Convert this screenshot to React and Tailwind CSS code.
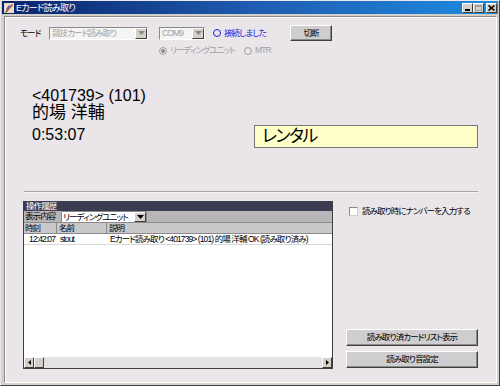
import React from "react";

const ui = "font-['Liberation_Sans','Noto_Sans_CJK_JP',sans-serif] [font-feature-settings:'palt']";
const small = "text-[8.5px] tracking-[-0.9px]";

const DropArrow = ({ disabled }) => (
    <div className="w-[12px] h-full shrink-0 bg-[#d4d0c8] border border-t-white border-l-white border-r-[#404040] border-b-[#404040] flex items-center justify-center">
        <svg width="7" height="4" viewBox="0 0 7 4">
            <path d="M0 0h7L3.5 4z" fill={disabled ? "#8a8a8a" : "#000"} />
        </svg>
    </div>
);

const Combo = ({ text, w }) => (
    <div className={`${w} h-[13px] flex bg-[#f6f5f6] border border-t-[#8a8a8a] border-l-[#8a8a8a] border-r-white border-b-white`}>
        <span className={`flex-1 ${small} leading-[11px] text-[#a09ea0] pl-[2px] whitespace-nowrap overflow-hidden`}>{text}</span>
        <DropArrow disabled />
    </div>
);

const Button = ({ children, className }) => (
    <div
        className={`${className} bg-[#cfcdcf] border border-t-white border-l-white border-r-[#404040] border-b-[#404040] shadow-[inset_-1px_-1px_0_#8a8a8a] flex items-center justify-center ${small} text-black whitespace-nowrap`}
    >
        {children}
    </div>
);

const Radio = ({ filled, color }) => (
    <span
        className={`inline-flex shrink-0 w-[8px] h-[8px] rounded-full border ${color} items-center justify-center bg-transparent`}
    >
        {filled && <span className="w-[4px] h-[4px] rounded-full bg-[#8a8a8a]" />}
    </span>
);

const App = () => {
    return (
        <div className={`w-[500px] h-[386px] bg-[#d4d0c8] border border-t-[#ece9ec] border-l-[#ece9ec] border-r-[#404040] border-b-[#404040] flex flex-col ${ui}`}>
            {/* title bar */}
            <div className="h-[13px] mx-[1px] bg-gradient-to-r from-[#0a246a] via-[#1f5bb0] to-[#1c8ce0] flex items-center">
                <svg width="10" height="10" viewBox="0 0 10 10" className="ml-[2px]">
                    <rect x="0" y="0" width="10" height="10" fill="#e8e0c8" />
                    <path d="M1 9L8 1l1 1-7 8z" fill="#c0392b" />
                    <path d="M2 6l3-4 1 1-3 4z" fill="#2a6fd0" />
                </svg>
                <span className="ml-[2px] text-white text-[9px] tracking-[-0.7px] leading-[12px] whitespace-nowrap">Eカード読み取り</span>
                <div className="ml-auto mr-[1px] flex gap-0">
                    <div className="w-[11px] h-[10px] bg-[#d4d0c8] border border-t-white border-l-white border-r-[#404040] border-b-[#404040] flex items-end justify-center pb-[1px]">
                        <span className="w-[5px] h-[2px] bg-black" />
                    </div>
                    <div className="w-[11px] h-[10px] bg-[#d4d0c8] border border-t-white border-l-white border-r-[#404040] border-b-[#404040] flex items-center justify-center">
                        <span className="w-[7px] h-[6px] border border-[#a0a0a0] border-t-2" />
                    </div>
                    <div className="w-[11px] h-[10px] ml-[2px] bg-[#d4d0c8] border border-t-white border-l-white border-r-[#404040] border-b-[#404040] flex items-center justify-center">
                        <svg width="7" height="6" viewBox="0 0 7 6">
                            <path d="M0.5 0.5l6 5M6.5 0.5l-6 5" stroke="#000" strokeWidth="1.6" />
                        </svg>
                    </div>
                </div>
            </div>

            {/* client */}
            <div className="flex-1 mt-[2px] ml-[3px] mr-[2px] mb-[2px] bg-[#e9e5e9] border border-t-[#8a8a8a] border-l-[#8a8a8a] border-r-[#ffffff] border-b-[#ffffff] shadow-[inset_1px_1px_0_#ffffff] flex flex-col">
                {/* mode row */}
                <div className={`mt-[8px] h-[16px] flex items-center ${small}`}>
                    <span className="ml-[15px] w-[29px] text-black whitespace-nowrap">モード</span>
                    <Combo text="競技カード読み取り" w="w-[99px]" />
                    <div className="ml-[11px]">
                        <Combo text="COM9" w="w-[46px]" />
                    </div>
                    <div className="ml-[8px] w-[77px] flex items-center gap-[3px] text-[#2020e0] whitespace-nowrap">
                        <Radio color="border-[#2020e0]" />
                        <span>接続しました</span>
                    </div>
                    <Button className="w-[42px] h-[16px]">切断</Button>
                </div>

                {/* reader row */}
                <div className={`mt-[4px] h-[11px] flex items-center ${small} text-[#a09ea0]`}>
                    <div className="ml-[154px] w-[85px] flex items-center gap-[3px] whitespace-nowrap">
                        <Radio filled color="border-[#a0a0a0]" />
                        <span>リーディングユニット</span>
                    </div>
                    <div className="flex items-center gap-[3px] whitespace-nowrap">
                        <Radio color="border-[#a0a0a0]" />
                        <span>MTR</span>
                    </div>
                </div>

                {/* info */}
                <div className="mt-[31px] flex">
                    <div className="ml-[27px] w-[222px] text-black">
                        <div className="text-[16px] leading-[17px] whitespace-nowrap">&lt;401739&gt; (101)</div>
                        <div className="text-[17px] leading-[18px] whitespace-nowrap">的場 洋輔</div>
                        <div className="mt-[4px] text-[16px] leading-[18px]">0:53:07</div>
                    </div>
                    <div className="mt-[38px] w-[224px] h-[23px] bg-[#ffffc8] border border-[#777777] flex items-center pl-[7px] text-[17px] tracking-[-1.5px] text-black">
                        レンタル
                    </div>
                </div>

                {/* divider */}
                <div className="mt-[43px] ml-[19px] w-[454px] border-t border-t-[#a8a4a8] border-b border-b-[#f6f4f6]" />

                {/* bottom */}
                <div className="mt-[8px] flex">
                    <div className="ml-[18px] w-[310px] h-[168px] flex flex-col bg-white border-r border-b border-r-[#404040] border-b-[#404040] border-l border-l-[#3b3c52]">
                        <div className={`h-[10px] shrink-0 bg-[#3b3c52] text-white ${small} leading-[10px] pl-[2px]`}>操作履歴</div>
                        <div className="h-[12px] shrink-0 bg-[#b8b6b8] flex items-center border-b border-b-[#8a8a8a]">
                            <span className={`w-[37px] ${small} leading-[11px] pl-[1px] text-black whitespace-nowrap`}>表示内容</span>
                            <div className="w-[86px] h-[12px] bg-white flex border border-[#8a8a8a]">
                                <span className={`flex-1 ${small} leading-[10px] pl-[1px] text-black whitespace-nowrap overflow-hidden`}>リーディングユニット</span>
                                <DropArrow />
                            </div>
                        </div>
                        <div className={`h-[11px] shrink-0 bg-[#cac8ca] flex ${small} leading-[10px] text-black border-b border-b-[#8a8a8a]`}>
                            <span className="w-[33px] pl-[1px] border-r border-r-[#8a8a8a]">時刻</span>
                            <span className="w-[50px] pl-[2px] border-r border-r-[#8a8a8a]">名前</span>
                            <span className="flex-1 pl-[2px]">説明</span>
                        </div>
                        <div className={`h-[11px] shrink-0 flex ${small} leading-[10px] text-black border-b border-b-[#d8d8d8] whitespace-nowrap`}>
                            <span className="w-[33px] text-right pr-[2px]">12:42:07</span>
                            <span className="w-[50px] pl-[3px]">stout</span>
                            <span className="flex-1 pl-[3px] overflow-hidden">Eカード読み取り &lt;401739&gt; (101) 的場 洋輔 OK (読み取り済み)</span>
                        </div>
                        <div className="flex-1" />
                        <div className="h-[11px] shrink-0 bg-[#e4e2e4] flex">
                            <div className="w-[10px] h-full bg-[#d4d0c8] border border-t-white border-l-white border-r-[#404040] border-b-[#404040] flex items-center justify-center">
                                <svg width="3" height="5" viewBox="0 0 3 5"><path d="M3 0v5L0 2.5z" fill="#000" /></svg>
                            </div>
                            <div className="w-[10px] h-full bg-[#d4d0c8] border border-t-white border-l-white border-r-[#404040] border-b-[#404040]" />
                            <div className="flex-1" />
                            <div className="w-[10px] h-full bg-[#d4d0c8] border border-t-white border-l-white border-r-[#404040] border-b-[#404040] flex items-center justify-center">
                                <svg width="3" height="5" viewBox="0 0 3 5"><path d="M0 0v5L3 2.5z" fill="#000" /></svg>
                            </div>
                        </div>
                    </div>

                    <div className="ml-[13px] w-[132px] h-[168px] flex flex-col">
                        <div className={`mt-[5px] ml-[3px] flex items-center gap-[4px] ${small} leading-[11px] text-black whitespace-nowrap`}>
                            <span className="w-[9px] h-[9px] shrink-0 bg-white border border-t-[#8a8a8a] border-l-[#8a8a8a] border-r-[#d0d0d0] border-b-[#d0d0d0]" />
                            <span>読み取り時にナンバーを入力する</span>
                        </div>
                        <Button className="mt-auto h-[17px]">読み取り済カードリスト表示</Button>
                        <Button className="mt-[5px] mb-[1px] h-[17px]">読み取り音設定</Button>
                    </div>
                </div>
            </div>
        </div>
    );
};

export default App;
